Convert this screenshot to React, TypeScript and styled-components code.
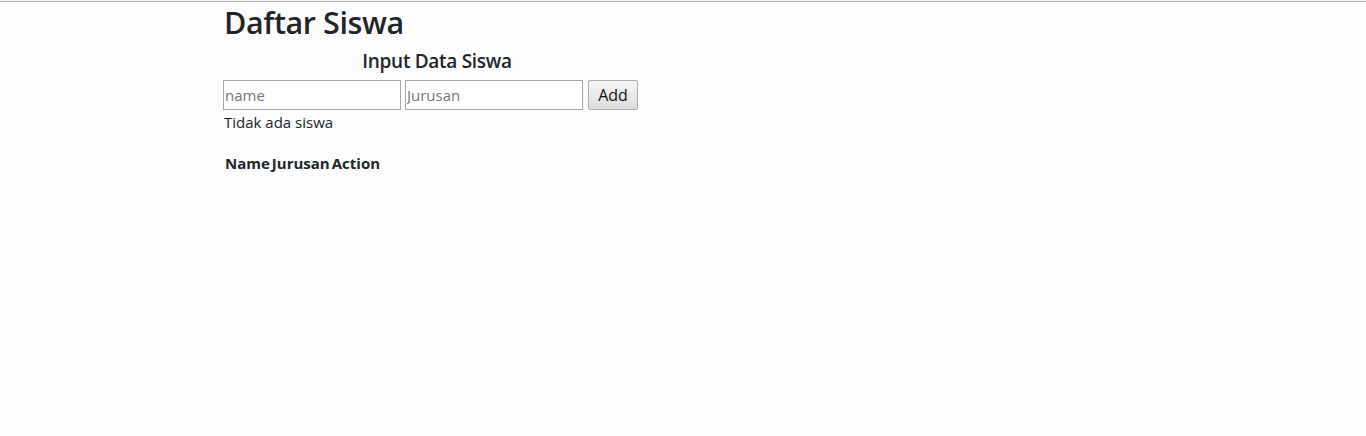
import React from "react";
import styled, { createGlobalStyle } from "styled-components";

const Global = createGlobalStyle`
  html, body { margin: 0; padding: 0; background: #fdfdfd; }
  body { font-family: "Open Sans", "Noto Sans", sans-serif; color: #212529; }
`;

const TopRule = styled.div`
  height: 1px;
  margin-top: 1px;
  background: #b3b3b3;
`;

const Container = styled.div`
  padding-left: 224px;
  width: 426px;
`;

const Title = styled.h1`
  margin: 0;
  font-size: 30.5px;
  font-weight: 600;
  line-height: 40px;
  letter-spacing: -0.4px;
`;

const SubTitle = styled.h3`
  margin: 7px 0 0;
  font-size: 19px;
  font-weight: 600;
  line-height: 24px;
  text-align: center;
  letter-spacing: -0.3px;
`;

const Form = styled.form`
  display: flex;
  align-items: center;
  gap: 4px;
  margin-top: 7px;
  margin-left: -1px;
`;

const Input = styled.input`
  box-sizing: border-box;
  width: 178px;
  height: 30px;
  border: 1px solid #a6a6a6;
  padding: 0 1px;
  font-family: inherit;
  font-size: 15px;
  background: #fff;
  &::placeholder { color: #767676; }
`;

const Button = styled.button`
  box-sizing: border-box;
  margin-left: 1px;
  width: 50px;
  height: 30px;
  padding: 0;
  border: 1px solid #adadad;
  border-radius: 2px;
  background: linear-gradient(#f6f6f6, #dddddd);
  font-family: inherit;
  font-size: 16px;
  color: #111;
`;

const Empty = styled.p`
  margin: 1px 0 0;
  font-size: 15px;
  line-height: 22px;
`;

const Table = styled.table`
  margin-top: 19px;
  border-collapse: collapse;
  th {
    padding: 0 1px;
    font-size: 15px;
    font-weight: 700;
    line-height: 22px;
    text-align: left;
    letter-spacing: 0;
  }
`;

export default function App() {
  return (
    <>
      <Global />
      <TopRule />
      <Container>
        <Title>Daftar Siswa</Title>
        <SubTitle>Input Data Siswa</SubTitle>
        <Form onSubmit={(e) => e.preventDefault()}>
          <Input placeholder="name" />
          <Input placeholder="Jurusan" />
          <Button type="submit">Add</Button>
        </Form>
        <Empty>Tidak ada siswa</Empty>
        <Table>
          <thead>
            <tr>
              <th>Name</th>
              <th>Jurusan</th>
              <th>Action</th>
            </tr>
          </thead>
        </Table>
      </Container>
    </>
  );
}
